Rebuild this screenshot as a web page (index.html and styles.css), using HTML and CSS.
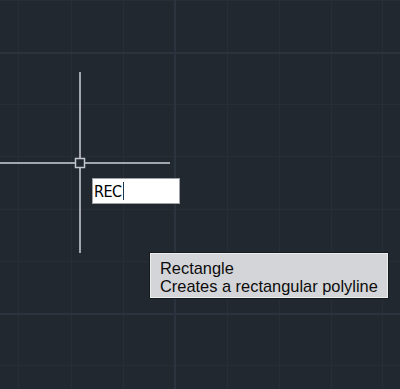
FILE: index.html
```html
<!DOCTYPE html>
<html>
    <head>
        <title>Drawing1</title>
        <link rel="stylesheet" href="styles.css">
    </head>
    <body>
        <div class="canvas">
            <svg class="grid" width="400" height="389" viewBox="0 0 400 389">
                <g class="minor">
                    <rect x="18" y="0" width="1" height="389"/>
                    <rect x="71" y="0" width="1" height="389"/>
                    <rect x="123" y="0" width="1" height="389"/>
                    <rect x="227" y="0" width="1" height="389"/>
                    <rect x="279" y="0" width="1" height="389"/>
                    <rect x="331" y="0" width="1" height="389"/>
                    <rect x="382" y="0" width="1" height="389"/>
                    <rect x="0" y="0" width="400" height="1"/>
                    <rect x="0" y="104" width="400" height="1"/>
                    <rect x="0" y="156" width="400" height="1"/>
                    <rect x="0" y="209" width="400" height="1"/>
                    <rect x="0" y="261" width="400" height="1"/>
                    <rect x="0" y="365" width="400" height="1"/>
                </g>
                <g class="major">
                    <rect x="174" y="0" width="2" height="389"/>
                    <rect x="0" y="52" width="400" height="2"/>
                    <rect x="0" y="313" width="400" height="2"/>
                </g>
            </svg>

            <!-- crosshair cursor with pick box -->
            <svg class="cursor" width="400" height="389" viewBox="0 0 400 389">
                <rect x="79" y="72" width="2" height="86"/>
                <rect x="79" y="168" width="2" height="85"/>
                <rect x="0" y="162" width="75" height="2"/>
                <rect x="85" y="162" width="85" height="2"/>
                <rect class="pickbox" x="75.5" y="158.5" width="9" height="9"/>
            </svg>

            <div class="cmd-input">REC<span class="caret"></span></div>

            <div class="tooltip">
                <div>Rectangle</div>
                <div>Creates a rectangular polyline</div>
            </div>
        </div>
    </body>
</html>
```

FILE: styles.css
```css
body {
    margin: 0;
    padding: 0;
    background: #212830;
    overflow: hidden;
}
.canvas {
    position: relative;
    width: 400px;
    height: 389px;
}
.grid, .cursor {
    position: absolute;
    top: 0;
    left: 0;
}
.grid .minor rect {
    fill: #262e37;
}
.grid .major rect {
    fill: #2b333e;
}
.cursor rect {
    fill: #a3a7ad;
}
.cursor .pickbox {
    fill: none;
    stroke: #c4c7cb;
    stroke-width: 1.5;
}
.cmd-input {
    position: absolute;
    left: 92px;
    top: 178px;
    width: 85px;
    height: 24px;
    background: #fff;
    border: 1px solid #9ea2a7;
    font-family: "DejaVu Sans Condensed", "DejaVu Sans", sans-serif;
    font-size: 16px;
    line-height: 25px;
    color: #000;
    padding-left: 1px;
    letter-spacing: -0.5px;
}
.caret {
    display: inline-block;
    width: 1px;
    height: 18px;
    margin-left: 1px;
    vertical-align: -3px;
    background: #1b3556;
}
.tooltip {
    position: absolute;
    left: 150px;
    top: 253px;
    width: 227px;
    padding: 5px 0 2px 9px;
    background: #d4d5d8;
    border: 1px solid #eceded;
    box-shadow: 0 0 0 1px #161b21;
    font-family: "Liberation Sans", Arial, sans-serif;
    font-size: 16.4px;
    line-height: 18px;
    color: #0c0c0c;
}
```
